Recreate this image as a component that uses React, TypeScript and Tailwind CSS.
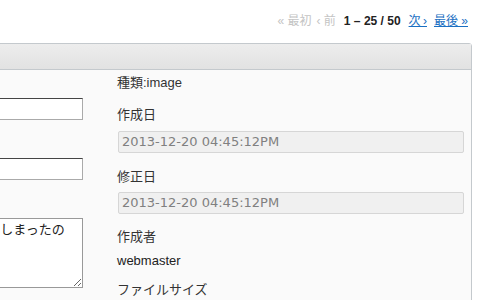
export default function App() {
  const sans = "font-['Liberation_Sans','Noto_Sans_CJK_JP',sans-serif]";
  const field =
    "ml-px h-[22px] rounded-[2px] border border-[#d6d6d6] bg-[#f0f0f0] pl-[3px] text-[13px] leading-5 text-[#808080] font-['DejaVu_Sans','Noto_Sans_CJK_JP',sans-serif]";

  return (
    <div className={`h-[300px] w-[480px] overflow-hidden bg-white ${sans}`}>
      {/* Pager */}
      <div className="flex h-[43px] items-center justify-end pr-3 pb-px text-[12px]">
        <span className="text-[#c4c4c4]">« 最初</span>
        <span className="ml-[5px] text-[#c4c4c4]">‹ 前</span>
        <span className="ml-[8px] font-bold text-[#222]">1 – 25 / 50</span>
        <a href="#" className="ml-[8px] text-[#1a6fc2] underline">
          次&thinsp;›
        </a>
        <a href="#" className="ml-[7px] text-[#1a6fc2] underline">
          最後 »
        </a>
      </div>

      {/* Panel */}
      <div className="ml-[-200px] w-[672px] rounded-tr-[3px] border border-[#c4c9cd]">
        <div className="h-[26px] border-b border-[#c4c9cd] bg-gradient-to-b from-[#ededed] to-[#e2e2e2]" />

        <div className="flex h-[300px] bg-[#fafafa]">
          {/* Left column */}
          <div className="flex w-[316px] flex-col items-end pt-[28px] pr-[34px]">
            <input
              type="text"
              className="h-[22px] w-[196px] border border-[#aaa] border-t-[#444] bg-white"
            />
            <input
              type="text"
              className="mt-[38px] h-[22px] w-[196px] border border-[#aaa] border-t-[#444] bg-white"
            />
            <textarea
              defaultValue="ファイルを間違えてしまったので差替え"
              className="mt-[38px] h-[70px] w-[202px] resize border border-[#999] bg-white pt-[3px] pr-[8px] pl-[2px] text-[13px] leading-4 text-[#222] font-['DejaVu_Sans','Noto_Sans_CJK_JP',sans-serif]"
            />
          </div>

          {/* Right column */}
          <div className="flex-1 pt-[3px] pr-[7px] text-[13px] leading-5 text-[#333]">
            <div>種類:image</div>

            <div className="mt-[12px]">作成日</div>
            <div className={`mt-[6px] ${field}`}>2013-12-20 04:45:12PM</div>

            <div className="mt-[14px]">修正日</div>
            <div className={`mt-[5px] ${field}`}>2013-12-20 04:45:12PM</div>

            <div className="mt-[13px]">作成者</div>
            <div className="mt-[4px] text-[#222]">webmaster</div>

            <div className="mt-[9px]">ファイルサイズ</div>
          </div>
        </div>
      </div>
    </div>
  );
}
